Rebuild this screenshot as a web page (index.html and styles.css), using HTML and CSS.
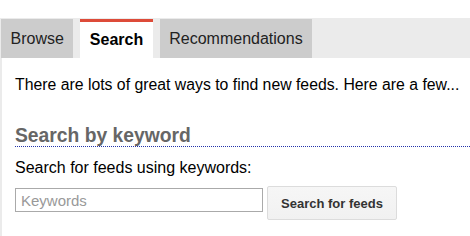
FILE: index.html
```html
<!DOCTYPE html>
<html lang="en">
<head>
  <meta charset="utf-8">
  <title>Feeds</title>
  <link rel="stylesheet" href="styles.css">
</head>
<body>
  <div class="tabs">
    <div class="tab">Browse</div>
    <div class="tab active">Search</div>
    <div class="tab">Recommendations</div>
  </div>
  <div class="panel">
    <p class="intro">There are lots of great ways to find new feeds. Here are a few...</p>
    <h2 class="section-title">Search by keyword</h2>
    <p class="label">Search for feeds using keywords:</p>
    <div class="search-row">
      <input class="keywords" type="text" placeholder="Keywords">
      <div class="btn">Search for feeds</div>
    </div>
  </div>
</body>
</html>
```

FILE: styles.css
```css
body {
  margin: 0;
  padding-top: 18px;
  background: #FFFFFF;
  font-family: "Liberation Sans", Arial, sans-serif;
  color: #000000;
}

.tabs {
  display: flex;
  gap: 7px;
  height: 40px;
  padding-top: 1px;
  box-sizing: border-box;
  background: #EBEBEB;
}

.tab {
  height: 39px;
  line-height: 40px;
  padding: 0 9.5px;
  background: #CCCCCC;
  color: #222222;
  font-size: 16px;
}

.tab:first-child {
  margin-left: 1px;
}

.tab.active {
  background: #FFFFFF;
  color: #000000;
  font-weight: bold;
  border-top: 3px solid #DD4B39;
  height: 36px;
  line-height: 36px;
}

.panel {
  border-left: 2px solid #EBEBEB;
  padding: 0 0 20px 13px;
}

.intro {
  margin: 0;
  padding-top: 18px;
  font-size: 15.8px;
}

.section-title {
  margin: 31px 0 0;
  line-height: 21px;
  font-size: 19.3px;
  color: #666666;
  border-bottom: 1px dotted #2233AA;
}

.label {
  margin: 12px 0 0;
  font-size: 16px;
}

.search-row {
  display: flex;
  align-items: flex-start;
  gap: 4px;
  margin-top: 9px;
}

.keywords {
  width: 248px;
  height: 24px;
  box-sizing: border-box;
  margin: 2px 0 0;
  padding: 0 5px;
  border: 1px solid #AAAAAA;
  font-family: "Liberation Sans", Arial, sans-serif;
  font-size: 15px;
}

.keywords::placeholder {
  color: #999999;
}

.btn {
  width: 130px;
  height: 34px;
  box-sizing: border-box;
  line-height: 34px;
  text-align: center;
  background: linear-gradient(#F6F6F6, #F1F1F1);
  border: 1px solid #DCDCDC;
  border-radius: 2px;
  font-size: 13px;
  font-weight: bold;
  color: #333333;
}
```
